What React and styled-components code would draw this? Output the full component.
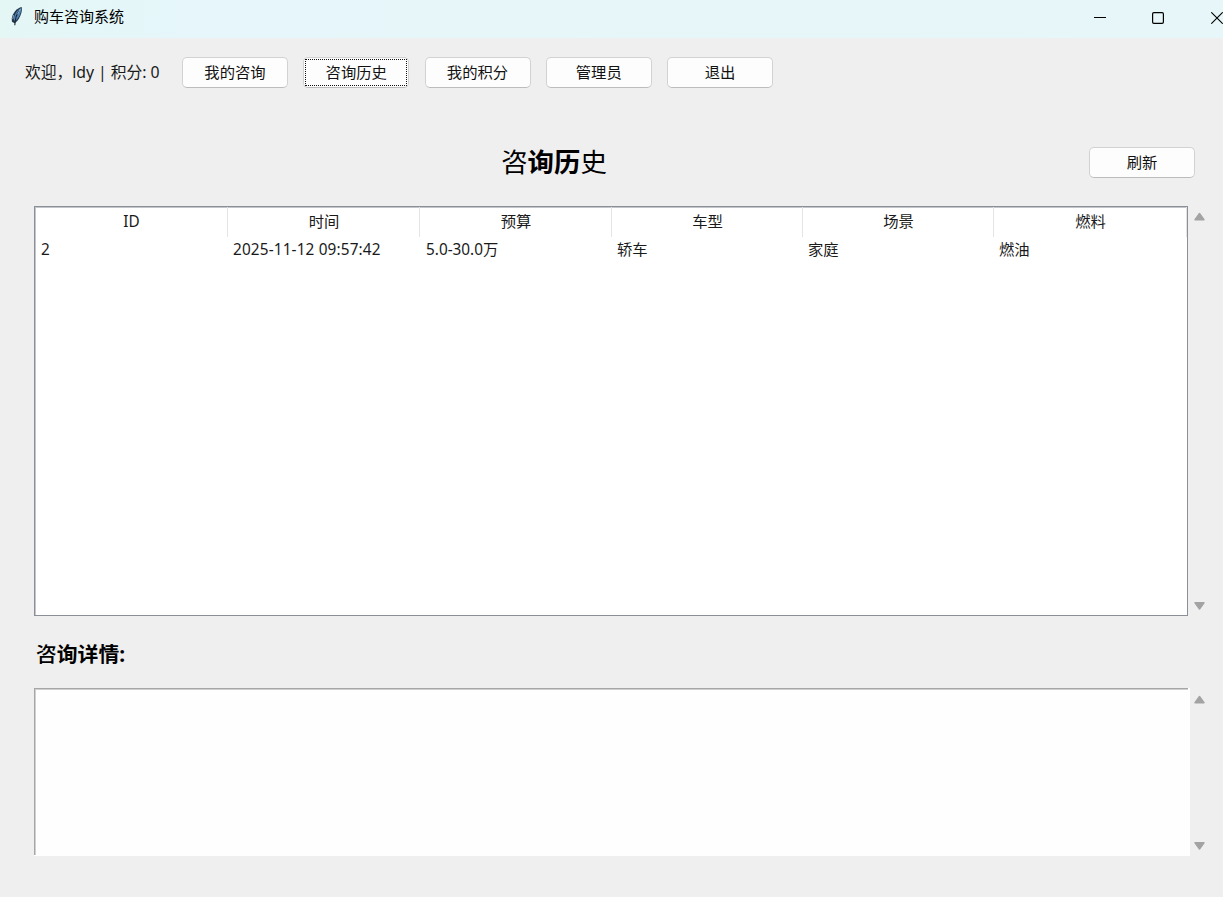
import React from 'react';
import styled, { createGlobalStyle } from 'styled-components';

const GlobalStyle = createGlobalStyle`
  * { box-sizing: border-box; }
  body {
    margin: 0;
    overflow: hidden;
    background: #efefef;
    color: #1a1a1a;
    font-family: "Noto Sans", "Noto Sans CJK SC", sans-serif;
    font-size: 15.33px;
  }
`;

const Window = styled.div`
  width: 1223px;
  height: 897px;
  display: flex;
  flex-direction: column;
  overflow: hidden;
  background: #efefef;
`;

const TitleBar = styled.header`
  height: 38px;
  flex: none;
  display: flex;
  align-items: flex-start;
  justify-content: space-between;
  background: linear-gradient(100deg, #e4f7f5 0, #e6f6fb 200px, #e6f6f9 420px, #e7f6f8 100%);
`;

const AppName = styled.div`
  display: flex;
  gap: 10px;
  padding: 5px 0 0 10px;
  color: #000;
  font-size: 15px;
  line-height: 22px;
`;

const FeatherIcon = styled.svg`
  width: 14px;
  height: 22px;
  display: block;
  margin-top: 1px;
`;

const WindowControls = styled.div`
  display: flex;
  gap: 46px;
  padding-top: 12px;
  margin-right: 1px;
  svg { display: block; width: 12px; height: 12px; }
  svg:last-child { margin-left: 1px; margin-right: -1px; }
`;

const Toolbar = styled.nav`
  height: 31px;
  flex: none;
  display: flex;
  align-items: center;
  margin-top: 19px;
  padding-left: 25px;
  gap: 15.25px;
`;

const Welcome = styled.span`
  width: 142px;
  margin-right: -0.25px;
  white-space: pre;
  font-size: 15.8px;
  line-height: 21px;
  letter-spacing: -0.05px;
`;

const Button = styled.button`
  width: 106px;
  height: 31px;
  flex: none;
  display: flex;
  align-items: center;
  justify-content: center;
  padding: 2px;
  border: 1px solid #d2d2d2;
  border-bottom-color: #bcbcbc;
  border-radius: 5px;
  background: #fdfdfd;
  color: #111;
  font: inherit;
  line-height: 25px;
`;

const FocusRing = styled.span`
  width: 102px;
  height: 27px;
  flex: none;
  display: flex;
  align-items: center;
  justify-content: center;
  border: 1px dotted ${(p) => (p.$on ? '#111' : 'transparent')};
`;

const PageHeader = styled.div`
  height: 31px;
  flex: none;
  display: grid;
  grid-template-columns: 1040px 106px;
  justify-content: space-between;
  align-items: center;
  margin: 59px 28px 0 34px;
`;

const Title = styled.h1`
  margin: 0;
  color: #000;
  text-align: center;
  font-size: 26.4px;
  font-weight: 700;
  line-height: 31px;
  span { font-weight: 400; }
`;

const ScrollArea = styled.section`
  flex: none;
  display: flex;
  height: ${(p) => p.$height}px;
  margin: ${(p) => p.$top}px 0 0 34px;
  gap: ${(p) => p.$gap}px;
`;

const Scrollbar = styled.div`
  display: flex;
  flex-direction: column;
  justify-content: space-between;
  padding: ${(p) => p.$pad};
  svg { display: block; width: 12px; height: 9px; fill: #a3a3a3; stroke: #a3a3a3; stroke-width: 1.4; }
`;

const Table = styled.div`
  width: 1154px;
  border: 1px solid #8b9098;
  box-shadow: inset 1px 1px 0 #c3c7cc;
  background: #fff;
`;

const TableRow = styled.div`
  display: grid;
  grid-template-columns: 193px 192px 192px 191px 191px 193px;
  height: ${(p) => p.$height}px;
  line-height: 20px;
`;

const HeadCell = styled.div`
  height: 30px;
  padding: 4px 0 0 1px;
  text-align: center;
  border-right: 1px solid #e4e4e4;
`;

const Cell = styled.div`
  padding-left: ${(p) => p.$indent || 5}px;
  padding-top: 1px;
  letter-spacing: ${(p) => p.$tracking || 0}px;
  white-space: nowrap;
`;

const DetailTitle = styled.h2`
  margin: 23px 0 1px 36px;
  height: 31px;
  flex: none;
  color: #000;
  font-size: 20.8px;
  font-weight: 700;
  line-height: 31px;
  span { font-weight: 500; }
`;

const DetailBox = styled.div`
  width: 1156px;
  height: 168px;
  padding-right: 2px;
  background: #fefefe;
`;

const DetailText = styled.div`
  height: 167px;
  border-top: 1px solid #a6a6a6;
  border-left: 1px solid #a6a6a6;
  box-shadow: inset 1px 1px 0 #d0d0d0;
`;

const navItems = ['我的咨询', '咨询历史', '我的积分', '管理员', '退出'];
const columns = ['ID', '时间', '预算', '车型', '场景', '燃料'];
const record = [
  { text: '2', indent: 6 },
  { text: '2025-11-12 09:57:42', tracking: 0.15 },
  { text: '5.0-30.0万', indent: 6 },
  { text: '轿车' },
  { text: '家庭' },
  { text: '燃油' },
];

function ScrollArrows({ pad }) {
  return (
    <Scrollbar $pad={pad}>
      <svg viewBox="0 0 12 9"><path d="M5.5 1.5 10 7.7H1Z" strokeLinejoin="round" /></svg>
      <svg viewBox="0 0 12 9"><path d="M5.5 7 10 .8H1Z" strokeLinejoin="round" /></svg>
    </Scrollbar>
  );
}

export default function App() {
  return (
    <Window>
      <GlobalStyle />
      <TitleBar>
        <AppName>
          <FeatherIcon viewBox="0 0 14 22">
            <path d="M11.7 1C7 2 2.5 7 1.8 12.2L1.9 15.8 4.6 17.3C8.9 14.5 12.7 7 11.7 1Z" fill="#23364a" />
            <path d="M11.1 2C7.2 4 4.2 8.1 3.8 13.5L5 15.5C8.9 12 11.5 6.8 11.1 2Z" fill="#4f83b8" />
            <path d="M9.4 4.7C6.3 8 5.2 12 4.8 19.2" fill="none" stroke="#182330" strokeWidth="1.1" />
            <path d="M10.4 3.2 7.3 8.4M3.5 9.2 2.8 13.1" fill="none" stroke="#9cb9d2" strokeWidth=".9" />
          </FeatherIcon>
          <span>购车咨询系统</span>
        </AppName>
        <WindowControls>
          <svg viewBox="0 0 12 12"><path d="M0 5.5H12" stroke="#000" /></svg>
          <svg viewBox="0 0 12 12"><rect x=".6" y=".6" width="10.8" height="10.8" rx="1.3" fill="none" stroke="#000" strokeWidth="1.2" /></svg>
          <svg viewBox="0 0 12 12"><path d="M.3.3 11.7 11.7M11.7.3.3 11.7" stroke="#000" strokeWidth="1.1" /></svg>
        </WindowControls>
      </TitleBar>
      <Toolbar>
        <Welcome>欢迎，ldy | 积分: 0</Welcome>
        {navItems.map((label) => (
          <Button key={label}>
            <FocusRing $on={label === '咨询历史'}>{label}</FocusRing>
          </Button>
        ))}
      </Toolbar>
      <PageHeader>
        <Title><span>咨</span>询历<span>史</span></Title>
        <Button>刷新</Button>
      </PageHeader>
      <ScrollArea $top={28} $height={410} $gap={6}>
        <Table>
          <TableRow $height={31}>
            {columns.map((name) => <HeadCell key={name}>{name}</HeadCell>)}
          </TableRow>
          <TableRow $height={28}>
            {record.map((cell, i) => (
              <Cell key={columns[i]} $indent={cell.indent} $tracking={cell.tracking}>{cell.text}</Cell>
            ))}
          </TableRow>
        </Table>
        <ScrollArrows pad="6px 0 5px" />
      </ScrollArea>
      <DetailTitle><span>咨</span>询详情:</DetailTitle>
      <ScrollArea $top={17} $height={168} $gap={4}>
        <DetailBox><DetailText /></DetailBox>
        <ScrollArrows pad="7px 0 5px" />
      </ScrollArea>
    </Window>
  );
}
